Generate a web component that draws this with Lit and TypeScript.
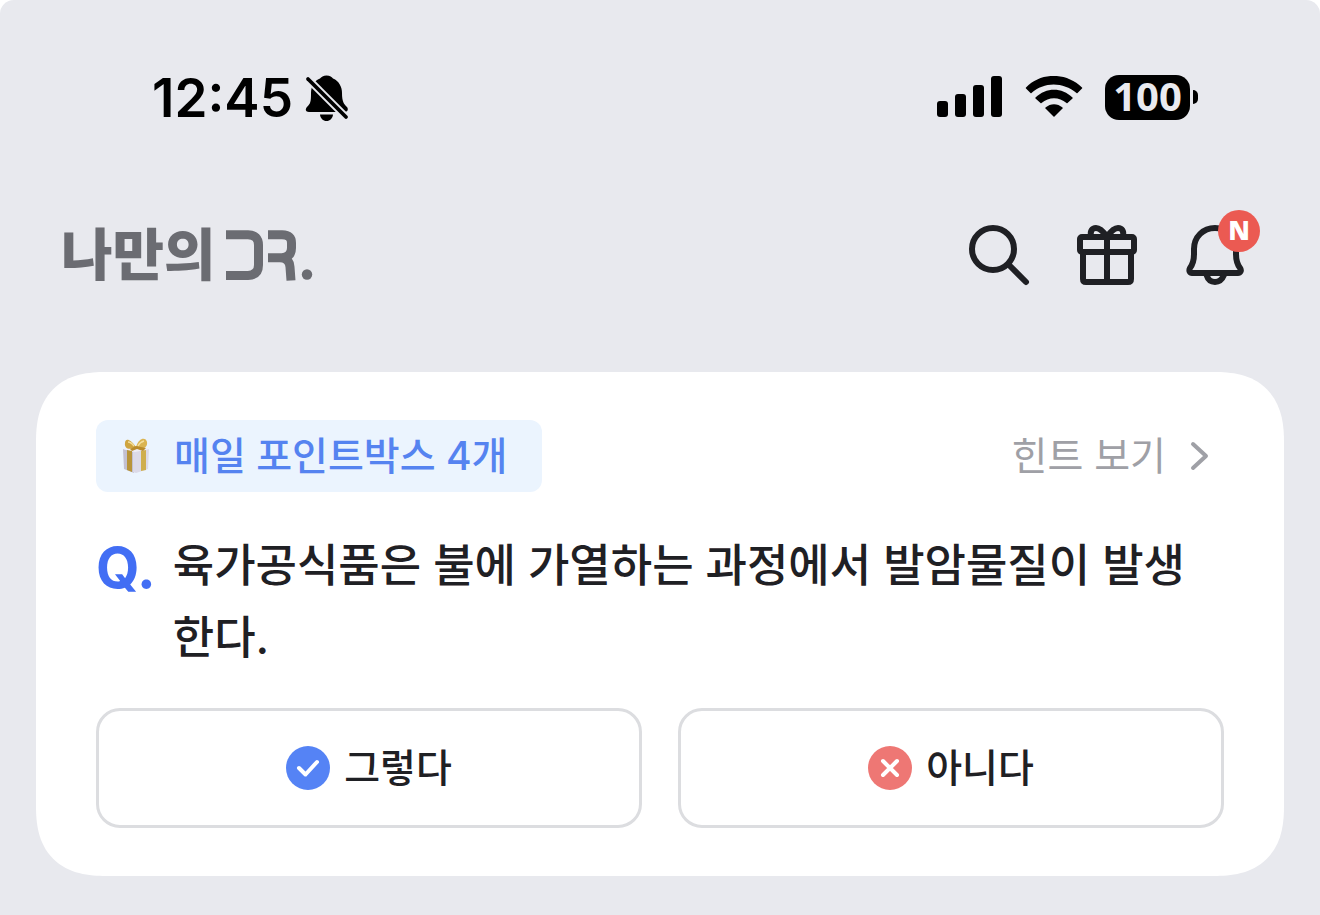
import { LitElement, html, css, svg } from "lit";
import { customElement, property, state } from "lit/decorators.js";
import { classMap } from "lit/directives/class-map.js";

@customElement("status-bar")
class StatusBar extends LitElement {
  static styles = css`
    :host { display: block; }
    .bar { display: flex; align-items: center; justify-content: space-between; padding: 73px 122px 0 152px; height: 48px; color: #000; }
    .side { display: flex; align-items: center; }
    .left { gap: 12px; padding-top: 2px; }
    .right { gap: 22px; }
    .time { font: 600 53px/48px Inter, "Liberation Sans", sans-serif; }
    .battery { display: flex; align-items: center; gap: 3px; }
    .level { width: 85px; height: 45px; border-radius: 14px; background: #000; color: #e9eaef; font: 700 40px/42px "Open Sans", sans-serif; text-align: center; }
    .nub { width: 5px; height: 14px; border-radius: 0 5px 5px 0; background: #000; }
    svg { display: block; }
  `;
  render() {
    return html`
      <div class="bar">
        <div class="side left">
          <span class="time">12:45</span>
          <svg width="44" height="46" viewBox="0 0 44 46" role="img" aria-label="무음">
            <mask id="cut"><rect width="44" height="46" fill="#fff" /><path d="M-3 -2L46 47" stroke="#000" stroke-width="7.5" /></mask>
            <path mask="url(#cut)" d="M21.500 0.500C25 0.500 27 2 28 3.500C34 6 37 12 37 18C37 27 39 29 42 32C44 35 42 37 39 37H4C0.500 37 0 34 2 32C5.500 28.500 6 27 6 18C6 11 9 6 15 3.500C16 2 18.500 0.500 21.500 0.500Z" />
            <path d="M15 39.500H28C27.500 43.500 25 46 21.500 46S15.500 43.500 15 39.500Z" />
            <path d="M3 4L41 42" stroke="#000" stroke-width="3.800" stroke-linecap="round" />
          </svg>
        </div>
        <div class="side right">
          <svg width="66" height="42" viewBox="0 0 66 42" role="img" aria-label="신호">
            <rect y="25" width="11" height="16" rx="3" /><rect x="18" y="18" width="11" height="23" rx="3" />
            <rect x="36" y="9" width="11" height="32" rx="3" /><rect x="54" width="11" height="41" rx="3" />
          </svg>
          <svg width="58" height="42" viewBox="0 1 58 42" role="img" aria-label="와이파이">
            <path d="M1 12.500C16-3 41-3 57 12.500Q57.500 13 57 13.500L52.500 18Q52 18.500 51.500 18C38 6.500 19 6.500 6.500 18Q6 18.500 5.500 18L1 13.500Q0.500 13 1 12.500Z" />
            <path d="M10.500 22.500C21 12 37 12 47.500 22.500Q48 23 47.500 23.500L42.500 28Q42 28.500 41.500 28C34 21.500 24 21.500 16.500 28Q16 28.500 15.500 28L10.500 23.500Q10 23 10.500 22.500Z" />
            <path d="M20.500 32.500C25.500 28 32.500 28 37.500 32.500Q38 33 37.500 33.500L29.500 41.500Q29 42 28.500 41.500L20.500 33.500Q20 33 20.500 32.500Z" />
          </svg>
          <div class="battery"><div class="level">100</div><div class="nub"></div></div>
        </div>
      </div>`;
  }
}

@customElement("top-bar")
class TopBar extends LitElement {
  static styles = css`
    :host { display: block; }
    header { display: flex; align-items: center; justify-content: space-between; padding: 98px 69px 81px 61px; }
    .brand { display: flex; align-items: center; gap: 10px; color: #6b6c72; text-decoration: none; font: 900 56px/64px "Noto Sans CJK KR", sans-serif; }
    .name { padding-bottom: 8px; }
    nav { display: flex; gap: 36px; }
    button { position: relative; width: 72px; height: 72px; padding: 0; border: 0; background: none; cursor: pointer; }
    svg { display: block; }
    .line { fill: none; stroke: #1f2024; stroke-width: 6; stroke-linecap: round; stroke-linejoin: round; }
    .badge { position: absolute; top: -9px; right: -9px; width: 42px; height: 42px; border-radius: 50%; background: #eb5a52; color: #fff; font: 800 26px/40px "Open Sans", sans-serif; text-align: center; }
  `;
  render() {
    return html`
      <header>
        <a class="brand" href="#home" aria-label="나만의 DR.">
          <span class="name">나만의</span>
          <svg width="88" height="52" viewBox="0 0 88 52" fill="none" stroke="#6b6c72" stroke-width="9">
            <path d="M0 5.700H22Q32.500 6 32.500 16V36Q32.500 46 22 46.500H0" />
            <path d="M42 5.700H56Q65.500 6 65.500 14V19Q65.500 28 56 28.800H42M54 28.800Q63.500 29 64 38L65 51.500" />
            <circle cx="81" cy="45.500" r="5.200" fill="#6b6c72" stroke="none" />
          </svg>
        </a>
        <nav>
          <button aria-label="검색"><svg width="72" height="72" class="line"><circle cx="30" cy="30" r="21" /><path d="M46 46L63 63" /></svg></button>
          <button aria-label="선물"><svg width="72" height="72" class="line">
            <rect x="9" y="18" width="54" height="15" rx="2" /><path d="M12 33V60Q12 63 15 63H57Q60 63 60 60V33M36 18V63" />
            <path d="M36 18C32 12 28 9 25 9C21 9 19 12 20 17M36 18C40 12 44 9 47 9C51 9 53 12 52 17" />
          </svg></button>
          <button aria-label="알림"><svg width="72" height="72" class="line">
            <path d="M36 9C24 9 15 18 15 30V35C15 42 14 45 11 49C9.500 52 11 54 13 54H59C61 54 63 52 61 49C58 45 57 42 57 35V30C57 18 48 9 36 9Z" />
            <path d="M27.500 56C29 61 32 63 36 63S43 61 45 56" />
          </svg><span class="badge">N</span></button>
        </nav>
      </header>`;
  }
}

@customElement("quiz-card")
class QuizCard extends LitElement {
  @property({ type: Number }) boxes = 4;
  @property() question = "";
  @state() private answer = "";

  static styles = css`
    :host { display: block; }
    .card { margin: 0 36px; padding: 48px 60px; border-radius: 64px; background: #fff; display: flex; flex-direction: column; font-family: Inter, "Noto Sans CJK KR", sans-serif; color: #1f2024; }
    @supports (corner-shape: superellipse(1.3)) {
      .card { border-radius: 70px; corner-shape: superellipse(1.3); }
    }
    .top { display: flex; align-items: center; justify-content: space-between; }
    .chip { display: flex; align-items: center; gap: 24px; height: 72px; padding: 0 35px 0 26px; border-radius: 12px; background: #ebf4fe; color: #5583f0; font-size: 39px; font-weight: 500; line-height: 72px; }
    .hint { display: flex; align-items: center; gap: 24px; padding-right: 14px; color: #9fa0a6; text-decoration: none; font-size: 39px; line-height: 72px; }
    svg { display: block; }
    .question { display: flex; gap: 17px; margin: 38px 0 34px; font-size: 45px; font-weight: 500; line-height: 72px; }
    .mark { color: #426ef4; font: 700 56px/76px Inter, sans-serif; height: 72px; }
    .answers { display: grid; grid-template-columns: 1fr 1fr; gap: 36px; }
    .answer { display: flex; align-items: center; justify-content: center; gap: 14px; height: 120px; padding: 0; border: 3px solid #dcdde0; border-radius: 24px; background: #fff; color: inherit; font: 500 39px/72px Inter, "Noto Sans CJK KR", sans-serif; cursor: pointer; }
    .picked { border-color: #5583f0; }
  `;

  private option(label: string, color: string, glyph: unknown) {
    return html`<button class=${classMap({ answer: true, picked: this.answer === label })} @click=${() => (this.answer = label)}>
      <svg width="44" height="44" fill="none" stroke="#fff" stroke-width="4" stroke-linecap="round" stroke-linejoin="round"><circle cx="22" cy="22" r="22" fill=${color} stroke="none" />${glyph}</svg>
      <span>${label}</span>
    </button>`;
  }

  render() {
    return html`
      <section class="card">
        <div class="top">
          <div class="chip">
            <svg width="28" height="38" viewBox="0 0 28 38">
              <path d="M1 12L12 15V36L2 32Z" fill="#c3c0d0" />
              <path d="M11 14L27 12L26 32L14 36L11 35Z" fill="#dcdae8" />
              <path d="M1 12L13 9L27 12L13 15Z" fill="#efedf5" />
              <path d="M5 13L10 14V35L5 33Z" fill="#b8943a" /><path d="M19 14L24 13V33L19 34Z" fill="#cfae4e" />
              <path d="M14 10C8 1 3 1 3 6C2 11 7 14 14 10Z" fill="#cfa540" /><path d="M14 10C17 0 24 0 25 5C26 11 20 13 14 10Z" fill="#dab452" />
              <path d="M14 9L8 12L10 14L15 12L21 14L24 11Z" fill="#b98b2c" />
              <path d="M6 5Q9 5 12 9M22 4Q18 5 16 9" fill="none" stroke="#f4df9d" stroke-width="1.500" />
            </svg>
            <span>매일 포인트박스 ${this.boxes}개</span>
          </div>
          <a class="hint" href="#hint">힌트 보기
            <svg width="20" height="30" fill="none" stroke="#9fa0a6" stroke-width="4" stroke-linecap="round" stroke-linejoin="round"><path d="M3 3L16 15L3 27" /></svg>
          </a>
        </div>
        <p class="question"><span class="mark">Q.</span><span>${this.question}</span></p>
        <div class="answers">
          ${this.option("그렇다", "#5583f5", svg`<path d="M13 22L19.500 28.500L31 16" />`)}
          ${this.option("아니다", "#ee7774", svg`<path d="M15 15L29 29M29 15L15 29" />`)}
        </div>
      </section>`;
  }
}

@customElement("app-root")
class AppRoot extends LitElement {
  static styles = css`
    :host { display: block; background: #fff; }
    main { min-height: 100vh; box-sizing: border-box; padding-bottom: 36px; border-radius: 14px 14px 0 0; background: #e8e9ee; overflow: hidden; }
  `;
  render() {
    return html`<main>
      <status-bar></status-bar>
      <top-bar></top-bar>
      <quiz-card question="육가공식품은 불에 가열하는 과정에서 발암물질이 발생한다."></quiz-card>
    </main>`;
  }
}
